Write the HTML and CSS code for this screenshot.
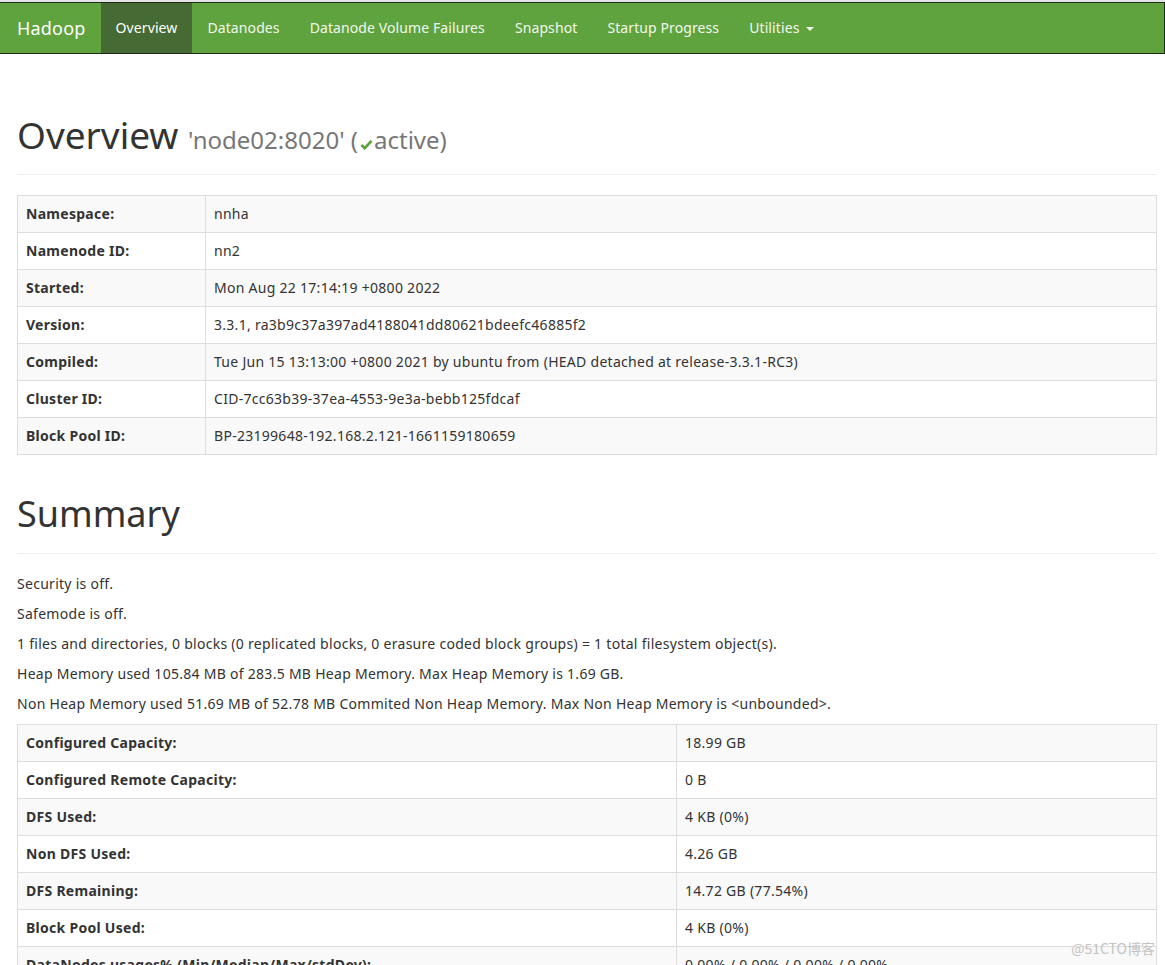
FILE: index.html
```html
<!DOCTYPE html>
<html>
<head>
<meta charset="utf-8">
<title>Namenode information</title>
<link rel="stylesheet" href="styles.css">
</head>
<body>
<div class="topline"></div>
<nav class="navbar">
  <a class="brand" href="#">Hadoop</a>
  <ul class="nav">
    <li class="active"><a href="#">Overview</a></li>
    <li><a href="#">Datanodes</a></li>
    <li><a href="#">Datanode Volume Failures</a></li>
    <li><a href="#">Snapshot</a></li>
    <li><a href="#">Startup Progress</a></li>
    <li><a href="#">Utilities <span class="caret"></span></a></li>
  </ul>
</nav>
<main class="container">
  <div class="page-header first">
    <h1>Overview <small>'node02:8020' (<svg class="ok" viewBox="0 0 14 12" width="13" height="11"><path d="M1.5 6.5 L5 10 L12.5 2" fill="none" stroke="#5fa33e" stroke-width="3"/></svg>active)</small></h1>
  </div>
  <table class="table info">
    <tr><th>Namespace:</th><td>nnha</td></tr>
    <tr><th>Namenode ID:</th><td>nn2</td></tr>
    <tr><th>Started:</th><td>Mon Aug 22 17:14:19 +0800 2022</td></tr>
    <tr><th>Version:</th><td>3.3.1, ra3b9c37a397ad4188041dd80621bdeefc46885f2</td></tr>
    <tr><th>Compiled:</th><td>Tue Jun 15 13:13:00 +0800 2021 by ubuntu from (HEAD detached at release-3.3.1-RC3)</td></tr>
    <tr><th>Cluster ID:</th><td>CID-7cc63b39-37ea-4553-9e3a-bebb125fdcaf</td></tr>
    <tr><th>Block Pool ID:</th><td>BP-23199648-192.168.2.121-1661159180659</td></tr>
  </table>
  <div class="page-header">
    <h1>Summary</h1>
  </div>
  <p>Security is off.</p>
  <p>Safemode is off.</p>
  <p>1 files and directories, 0 blocks (0 replicated blocks, 0 erasure coded block groups) = 1 total filesystem object(s).</p>
  <p>Heap Memory used 105.84 MB of 283.5 MB Heap Memory. Max Heap Memory is 1.69 GB.</p>
  <p>Non Heap Memory used 51.69 MB of 52.78 MB Commited Non Heap Memory. Max Non Heap Memory is &lt;unbounded&gt;.</p>
  <table class="table summary">
    <tr><th>Configured Capacity:</th><td>18.99 GB</td></tr>
    <tr><th>Configured Remote Capacity:</th><td>0 B</td></tr>
    <tr><th>DFS Used:</th><td>4 KB (0%)</td></tr>
    <tr><th>Non DFS Used:</th><td>4.26 GB</td></tr>
    <tr><th>DFS Remaining:</th><td>14.72 GB (77.54%)</td></tr>
    <tr><th>Block Pool Used:</th><td>4 KB (0%)</td></tr>
    <tr><th>DataNodes usages% (Min/Median/Max/stdDev):</th><td>0.00% / 0.00% / 0.00% / 0.00%</td></tr>
  </table>
</main>
<div class="watermark">@51CTO博客</div>
</body>
</html>
```
FILE: styles.css
```css
html, body {
  margin: 0;
  padding: 0;
}
body {
  font-family: "Noto Sans", "Noto Sans CJK SC", sans-serif;
  font-size: 14px;
  line-height: 20px;
  letter-spacing: 0.28px;
  color: #333;
  background: #fff;
  overflow: hidden;
}
.topline {
  height: 2px;
  background: #e4e4e4;
}
.navbar {
  display: flex;
  align-items: stretch;
  height: 50px;
  background: #5fa33e;
  border: 1px solid #1e2a18;
  border-left: none;
}
.navbar a {
  text-decoration: none;
  color: #f2f7ee;
}
.brand {
  padding: 0 15px 0 17px;
  font-size: 18px;
  line-height: 50px;
  letter-spacing: 0.2px;
  color: #fff !important;
}
.nav {
  display: flex;
  list-style: none;
  margin: 0;
  padding: 0;
}
.nav li a {
  display: block;
  padding: 0 15px;
  line-height: 50px;
  font-size: 14px;
  letter-spacing: 0.1px;
}
.nav li.active a {
  background: #456a33;
  color: #fff;
}
.caret {
  display: inline-block;
  width: 0;
  height: 0;
  margin-left: 3px;
  vertical-align: middle;
  border-top: 4px solid #f2f7ee;
  border-left: 4px solid transparent;
  border-right: 4px solid transparent;
}
.container {
  width: 1140px;
  padding: 0 0 0 17px;
}
.page-header {
  margin: 39px 0 20px;
  padding-bottom: 9px;
  border-bottom: 1px solid #eee;
}
.page-header.first {
  margin-top: 61px;
}
h1 {
  margin: 0 0 10px;
  font-size: 37px;
  line-height: 40px;
  font-weight: 400;
  letter-spacing: 0;
  color: #333;
}
.page-header:not(.first) h1 {
  font-size: 36px;
}
h1 small {
  font-size: 24px;
  line-height: 1;
  color: #777;
  font-weight: 400;
  letter-spacing: 0;
}
.ok {
  display: inline-block;
  vertical-align: -1px;
  margin: 0 1px 0 2px;
}
p {
  margin: 0 0 10px;
}
.table {
  width: 100%;
  border-collapse: collapse;
  margin-bottom: 20px;
  border: 1px solid #ddd;
}
.table th, .table td {
  padding: 8px;
  border: 1px solid #ddd;
  text-align: left;
  vertical-align: top;
  line-height: 20px;
}
.table th {
  font-weight: 700;
}
.table tr:nth-child(odd) {
  background: #f9f9f9;
}
.info th {
  width: 171px;
}
.summary th {
  width: 642px;
}
.watermark {
  position: absolute;
  right: 10px;
  top: 938px;
  font-size: 14px;
  color: #c4c4c4;
  letter-spacing: 0;
  font-family: "Noto Sans CJK SC", sans-serif;
}
```
